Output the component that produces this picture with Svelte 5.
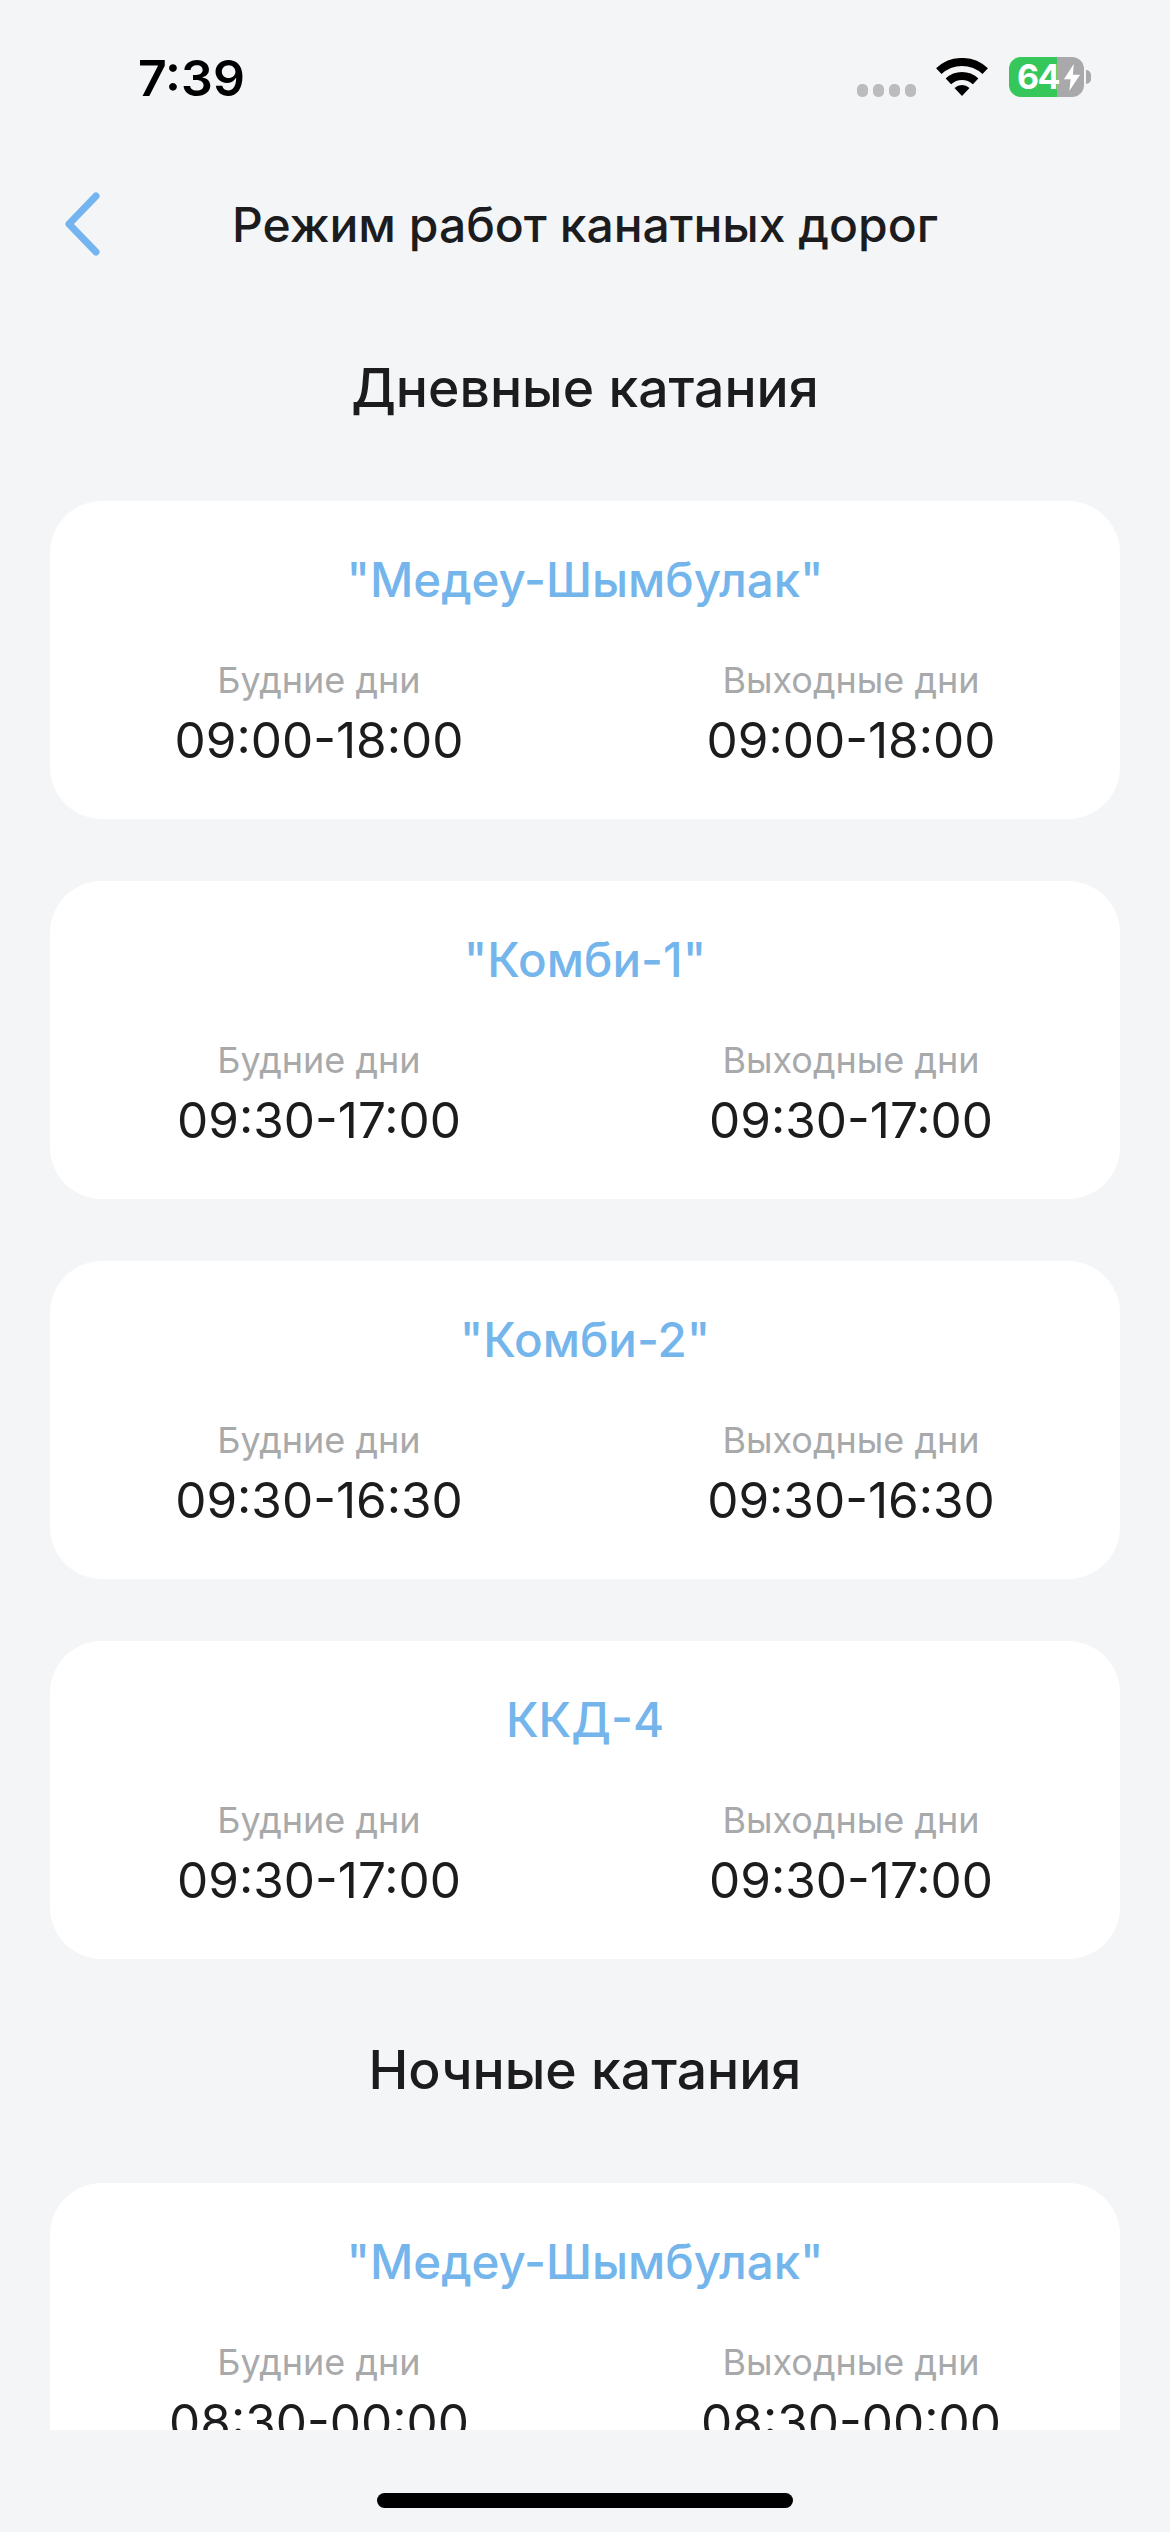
<script>
	const day = [
		{ name: '"Медеу-Шымбулак"', week: '09:00-18:00', off: '09:00-18:00' },
		{ name: '"Комби-1"', week: '09:30-17:00', off: '09:30-17:00' },
		{ name: '"Комби-2"', week: '09:30-16:30', off: '09:30-16:30' },
		{ name: 'ККД-4', week: '09:30-17:00', off: '09:30-17:00' }
	];
	const night = [
		{ name: '"Медеу-Шымбулак"', week: '08:30-00:00', off: '08:30-00:00' }
	];
</script>

{#snippet card(item)}
	<section class="card">
		<h3>{item.name}</h3>
		<div class="cols">
			<div class="col">
				<span class="label">Будние дни</span>
				<span class="time">{item.week}</span>
			</div>
			<div class="col">
				<span class="label">Выходные дни</span>
				<span class="time">{item.off}</span>
			</div>
		</div>
	</section>
{/snippet}

<div class="screen">
	<div class="status">
		<span class="clock">7:39</span>
		<div class="indicators">
			<div class="dots"><i></i><i></i><i></i><i></i></div>
			<svg class="wifi" width="52" height="38" viewBox="0 0 52 38" aria-hidden="true">
				<path d="M2.8 13.1 A34 34 0 0 1 49.2 13.1" fill="none" stroke="#000" stroke-width="8"/>
				<path d="M12.4 23.4 A20 20 0 0 1 39.6 23.4" fill="none" stroke="#000" stroke-width="8"/>
				<path d="M26 38 L18.5 30 A11 11 0 0 1 33.5 30 Z" fill="#000"/>
			</svg>
			<div class="battery">
				<div class="cell">
					<span class="level">64</span>
					<svg class="bolt" width="18" height="29" viewBox="0 0 20 30" aria-hidden="true">
						<path d="M12 0 L1 17 H8.5 L7 30 L19 12 H11 Z" fill="#fff"/>
					</svg>
				</div>
				<div class="nub"></div>
			</div>
		</div>
	</div>

	<header class="nav">
		<button class="back" aria-label="Назад">
			<svg width="38" height="64" viewBox="0 0 38 64" fill="none" aria-hidden="true">
				<path d="M33 4 L6 32 L33 60" stroke="#74b5f0" stroke-width="7" stroke-linecap="round" stroke-linejoin="round"/>
			</svg>
		</button>
		<h1>Режим работ канатных дорог</h1>
	</header>

	<main class="content">
		<h2 class="first">Дневные катания</h2>
		<div class="list">
			{#each day as item}
				{@render card(item)}
			{/each}
		</div>
		<h2>Ночные катания</h2>
		<div class="list">
			{#each night as item}
				{@render card(item)}
			{/each}
		</div>
	</main>

	<div class="home"><div class="bar"></div></div>
</div>

<style>
	:global(body) {
		margin: 0;
		background: #f4f5f7;
	}

	.screen {
		width: 1170px;
		height: 2532px;
		display: flex;
		flex-direction: column;
		background: #f4f5f7;
		font-family: Inter, "Noto Sans", sans-serif;
		color: #1c1c1e;
		overflow: hidden;
	}

	.status {
		height: 190px;
		box-sizing: border-box;
		padding: 48px 79px 0 138px;
		display: flex;
		justify-content: space-between;
		align-items: flex-start;
		flex: none;
	}

	.clock {
		font-size: 50px;
		line-height: 60px;
		font-weight: 600;
		color: #000;
	}

	.indicators {
		display: flex;
		align-items: flex-start;
		padding-top: 9px;
	}

	.dots {
		display: flex;
		gap: 5px;
		margin: 27px 20px 0 0;
	}

	.dots i {
		width: 11px;
		height: 13px;
		border-radius: 5px;
		background: #bcbcbe;
	}

	.wifi {
		margin-right: 21px;
		margin-top: 1px;
	}

	.battery {
		display: flex;
		align-items: center;
		gap: 2px;
	}

	.cell {
		width: 75px;
		height: 40px;
		border-radius: 12px;
		background: linear-gradient(90deg, #35c759 64%, #a9a9ab 64%);
		display: flex;
		align-items: center;
		padding-left: 8px;
		box-sizing: border-box;
	}

	.level {
		font-size: 34px;
		font-weight: 700;
		line-height: 40px;
		letter-spacing: -1.5px;
		color: #fff;
	}

	.bolt {
		margin-left: 4px;
	}

	.nub {
		width: 5px;
		height: 14px;
		border-radius: 0 5px 5px 0;
		background: #a9a9ab;
	}

	.nav {
		height: 70px;
		display: flex;
		align-items: center;
		flex: none;
		position: relative;
		justify-content: center;
	}

	.back {
		position: absolute;
		left: 63px;
		top: 2px;
		padding: 0;
		border: 0;
		background: none;
		display: flex;
	}

	h1 {
		margin: 0;
		font-size: 48px;
		line-height: 70px;
		font-weight: 500;
	}

	.content {
		flex: 1;
		min-height: 0;
		overflow: hidden;
		padding: 0 50px;
	}

	h2 {
		margin: 76px 0 78px;
		text-align: center;
		font-size: 53.5px;
		line-height: 70px;
		font-weight: 500;
	}

	h2.first {
		margin-top: 93px;
	}

	.list {
		display: flex;
		flex-direction: column;
		gap: 62px;
	}

	.card {
		height: 318px;
		box-sizing: border-box;
		padding-top: 47px;
		background: #fff;
		border-radius: 52px;
	}

	h3 {
		margin: 0;
		text-align: center;
		font-size: 47.5px;
		line-height: 64px;
		font-weight: 500;
		color: #74b5ec;
	}

	.cols {
		display: grid;
		grid-template-columns: 1fr 1fr;
		margin-top: 46px;
		padding: 0 3px;
	}

	.col {
		display: flex;
		flex-direction: column;
		align-items: center;
	}

	.label {
		font-size: 36px;
		line-height: 44px;
		color: #a8a9ab;
	}

	.time {
		font-size: 49.5px;
		line-height: 60px;
		color: #1c1c1e;
		margin-top: 8px;
	}

	.home {
		height: 102px;
		flex: none;
		display: flex;
		justify-content: center;
		padding-top: 63px;
		box-sizing: border-box;
	}

	.bar {
		width: 416px;
		height: 15px;
		border-radius: 8px;
		background: #000;
	}
</style>
